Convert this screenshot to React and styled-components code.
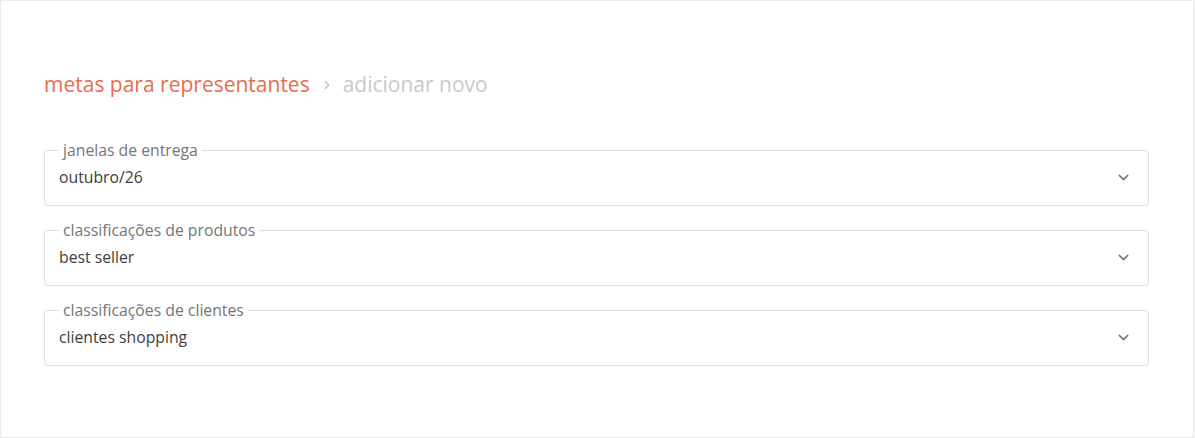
import styled, { createGlobalStyle } from "styled-components";
import { ChevronDown, ChevronRight } from "lucide-react";

const GlobalStyle = createGlobalStyle`
    * { box-sizing: border-box; }
    body {
        margin: 0;
        background: #fafafa;
        font-family: "Open Sans", "Noto Sans", sans-serif;
    }
`;

const fields = [
    { label: "janelas de entrega", value: "outubro/26" },
    { label: "classificações de produtos", value: "best seller" },
    { label: "classificações de clientes", value: "clientes shopping" },
];

const App = () => {
    return (
        <>
            <GlobalStyle />
            <Panel>
                <Breadcrumb>
                    <Crumb>metas para representantes</Crumb>
                    <Separator>
                        <ChevronRight size={14} strokeWidth={2} />
                    </Separator>
                    <Crumb $muted>adicionar novo</Crumb>
                </Breadcrumb>
                <Form>
                    {fields.map((field) => (
                        <Field key={field.label}>
                            <Legend>{field.label}</Legend>
                            <ValueRow>
                                <Value>{field.value}</Value>
                                <ChevronDown size={17} color="#767676" strokeWidth={2} />
                            </ValueRow>
                        </Field>
                    ))}
                </Form>
            </Panel>
        </>
    );
};
export default App;

const Panel = styled.div`
    width: 1194px;
    height: 438px;
    background: #fff;
    border: 1px solid #e9e9e9;
    border-top-color: #ececec;
    padding: 70px 44px 0 43px;
`;

const Breadcrumb = styled.div`
    display: flex;
    align-items: center;
    height: 26px;
`;

const Crumb = styled.span`
    font-size: 21px;
    line-height: 26px;
    color: ${(p) => (p.$muted ? "#c9c9c9" : "#ea6c4d")};
`;

const Separator = styled.span`
    display: flex;
    align-items: center;
    color: #bdbdbd;
    margin: 1px 9px 0 10px;
`;

const Form = styled.form`
    display: flex;
    flex-direction: column;
    gap: 15px;
    margin-top: 44px;
`;

const Field = styled.fieldset`
    margin: 0;
    height: 65px;
    padding: 0 16px 0 14px;
    border: 1px solid #dedede;
    border-radius: 4px;
`;

const Legend = styled.legend`
    padding: 0 4px;
    margin-left: 0;
    font-size: 15.75px;
    line-height: 18px;
    color: #767676;
`;

const ValueRow = styled.div`
    display: flex;
    align-items: center;
    justify-content: space-between;
    height: 20px;
    margin-top: 8px;
`;

const Value = styled.span`
    font-size: 15.75px;
    line-height: 20px;
    color: #3d3d3d;
`;
